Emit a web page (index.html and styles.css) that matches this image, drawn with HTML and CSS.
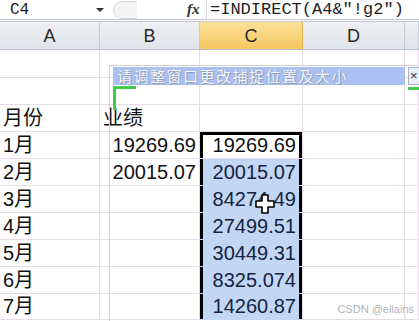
FILE: index.html
```html
<!DOCTYPE html>
<html lang="zh">
<head>
<meta charset="utf-8">
<title>INDIRECT</title>
<link rel="stylesheet" href="styles.css">
</head>
<body>
<div class="fbar">
    <div class="namebox">C4</div>
    <span class="arrow"></span>
    <span class="pill"></span>
    <span class="fx">fx</span>
    <div class="formula">=INDIRECT(A4&amp;″!g2″)</div>
</div>
<div class="sheet">
    <div class="hd">A</div><div class="hd">B</div><div class="hd on">C</div><div class="hd">D</div><div class="hd"></div>

    <div class="c r1"></div><div class="c r1"></div><div class="c r1"></div><div class="c r1"></div><div class="c r1"></div>
    <div class="c"></div><div class="c"></div><div class="c"></div><div class="c"></div><div class="c"></div>
    <div class="c">月份</div><div class="c">业绩</div><div class="c"></div><div class="c"></div><div class="c"></div>
    <div class="c">1月</div><div class="c n">19269.69</div><div class="c n act">19269.69</div><div class="c"></div><div class="c"></div>
    <div class="c">2月</div><div class="c n">20015.07</div><div class="c n sel">20015.07</div><div class="c"></div><div class="c"></div>
    <div class="c">3月</div><div class="c"></div><div class="c n sel">84274.49</div><div class="c"></div><div class="c"></div>
    <div class="c">4月</div><div class="c"></div><div class="c n sel">27499.51</div><div class="c"></div><div class="c"></div>
    <div class="c">5月</div><div class="c"></div><div class="c n sel">30449.31</div><div class="c"></div><div class="c"></div>
    <div class="c">6月</div><div class="c"></div><div class="c n sel">8325.074</div><div class="c"></div><div class="c"></div>
    <div class="c">7月</div><div class="c"></div><div class="c n sel">14260.87</div><div class="c"></div><div class="c"></div>
</div>

<!-- capture window overlay -->
<div class="frame"></div>
<div class="capbar">请调整窗口更改捕捉位置及大小</div>
<div class="capx">×</div>
<div class="gl-h"></div>
<div class="gl-v"></div>
<div class="gr-h"></div>

<svg class="cursor" width="20" height="20" viewBox="0 0 20 20">
    <path d="M7 1h6v6h6v6h-6v6h-6v-6h-6v-6h6z" fill="#fff" stroke="#000" stroke-width="1.6" stroke-linejoin="round"/>
</svg>

<div class="mark">CSDN @ellains</div>
</body>
</html>
```
FILE: styles.css
```css
body{ margin: 0; padding: 0; width: 419px; height: 321px; overflow: hidden; background: #fff; position: relative;}
*{box-sizing: border-box;}

.fbar{
    height: 22px; display: flex; align-items: center; background: #fff;
    border-bottom: 3px double #c3c8d0; font-family: "Liberation Mono", "Noto Sans CJK SC", monospace;
}
.namebox{ width: 96px; padding-left: 10px; font-size: 16px; color: #222; }
.arrow{
    width: 0; height: 0; border-left: 4px solid transparent; border-right: 4px solid transparent;
    border-top: 4px solid #333;
}
.pill{
    width: 24px; height: 18px; margin-left: 9px; border: 1px solid #d6d9de; border-right: 0;
    border-radius: 10px 0 0 10px; background: #f3f4f6;
}
.fx{
    margin-left: 50px; width: 16px; font-family: "Liberation Serif", serif; font-style: italic;
    font-weight: bold; font-size: 15px; color: #333;
}
.formula{
    margin-left: 3px; height: 19px; border-left: 1px solid #d6d9de; padding-left: 3px;
    font-size: 17px; line-height: 19px; color: #222; white-space: nowrap;
}

.sheet{
    display: grid; grid-template-columns: 100px 100px 103px 102px 14px;
    grid-template-rows: 28px 28px 27px 27px 27px 27px 27px 27px 27px 27px 26px;
    font-family: "Liberation Sans", "Noto Sans CJK SC", sans-serif;
}
.hd{
    border-right: 1px solid #c8ccd3; border-bottom: 1px solid #b9bfc8;
    background: linear-gradient(#eef0f3, #e0e3e8);
    font-size: 18px; color: #2a2a2a; text-align: center; line-height: 28px;
}
.hd.on{ background: linear-gradient(#fbe09a, #f6c75f); border-right-color: #e8b34a; }
.c{
    border-right: 1px solid #e6dbe6; border-bottom: 1px solid #e6dbe6;
    font-size: 20px; color: #111; padding: 0 3px 1px 3px;
    display: flex; align-items: flex-end; white-space: nowrap; line-height: 24px;
}
.c.n{ justify-content: flex-end; }
.c.act{ box-shadow: inset 3px 0 0 #000, inset -3px 0 0 #000, inset 0 3px 0 #000; padding-right: 6px; }
.c.sel{
    background: #c3d7f4; color: #14233f; border-bottom-color: #c3d7f4;
    box-shadow: inset 3px 0 0 #000, inset -3px 0 0 #000; padding-right: 6px;
}

.frame{
    position: absolute; left: 109px; top: 65px; right: 0; bottom: 0;
    border-left: 1px solid #cfcfd4; border-top: 1px solid #cfcfd4;
}
.capbar{
    position: absolute; left: 113px; top: 67px; width: 292px; height: 18px;
    background: #a9c1f2; padding-left: 4px; font-family: "Noto Sans CJK SC", sans-serif;
    font-size: 15px; line-height: 18px; color: #f4f6fb; letter-spacing: 1.5px; white-space: nowrap;
    text-shadow: 0 0 1px #8c9bb8, 1px 1px 1px #8c9bb8;
}
.capx{
    position: absolute; left: 408px; top: 67px; width: 11px; height: 18px;
    background: #e9edf5; border: 1px solid #aab3c4; border-right: 0; font: 13px/16px "Liberation Sans", sans-serif;
    color: #333; padding-left: 1px;
}
.gl-h{ position: absolute; left: 113px; top: 86px; width: 23px; height: 3px; background: #3fcd47; }
.gl-v{ position: absolute; left: 113px; top: 86px; width: 3px; height: 24px; background: #3fcd47; }
.gr-h{ position: absolute; left: 408px; top: 87px; width: 11px; height: 3px; background: #3fcd47; }

.cursor{ position: absolute; left: 255px; top: 194px; }
.mark{
    position: absolute; right: 5px; bottom: 6px; font: 11px "Liberation Sans", sans-serif;
    color: #b4b4b8;
}
```
